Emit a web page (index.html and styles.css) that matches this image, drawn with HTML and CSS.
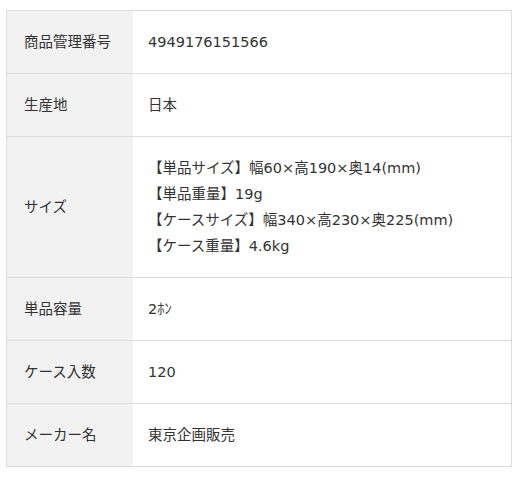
FILE: index.html
```html
<!DOCTYPE html>
<html lang="ja">
<head>
<meta charset="utf-8">
<link rel="stylesheet" href="styles.css">
</head>
<body>
<div class="spec">
  <table class="spec-table">
    <tr><th>商品管理番号</th><td>4949176151566</td></tr>
    <tr><th>生産地</th><td>日本</td></tr>
    <tr><th>サイズ</th><td>【単品サイズ】幅60×高190×奥14(mm)<br>【単品重量】19g<br>【ケースサイズ】幅340×高230×奥225(mm)<br>【ケース重量】4.6kg</td></tr>
    <tr><th>単品容量</th><td>2ﾎﾝ</td></tr>
    <tr><th>ケース入数</th><td>120</td></tr>
    <tr><th>メーカー名</th><td>東京企画販売</td></tr>
  </table>
</div>
</body>
</html>
```
FILE: styles.css
```css
html, body {
  margin: 0;
  padding: 0;
  background: #fff;
}
.spec {
  padding: 10px 0 0 6px;
}
.spec-table {
  width: 506px;
  border-collapse: collapse;
  border: 1px solid #dcdcdc;
  font-family: "DejaVu Sans", "Noto Sans CJK JP", sans-serif;
  font-size: 14.5px;
  line-height: 26px;
  color: #333;
}
.spec-table th,
.spec-table td {
  border-bottom: 1px solid #dcdcdc;
  padding: 18px 15px;
  text-align: left;
  vertical-align: middle;
}
.spec-table th {
  width: 94px;
  font-weight: normal;
  background: #f2f2f2;
  padding-left: 17px;
}
```
